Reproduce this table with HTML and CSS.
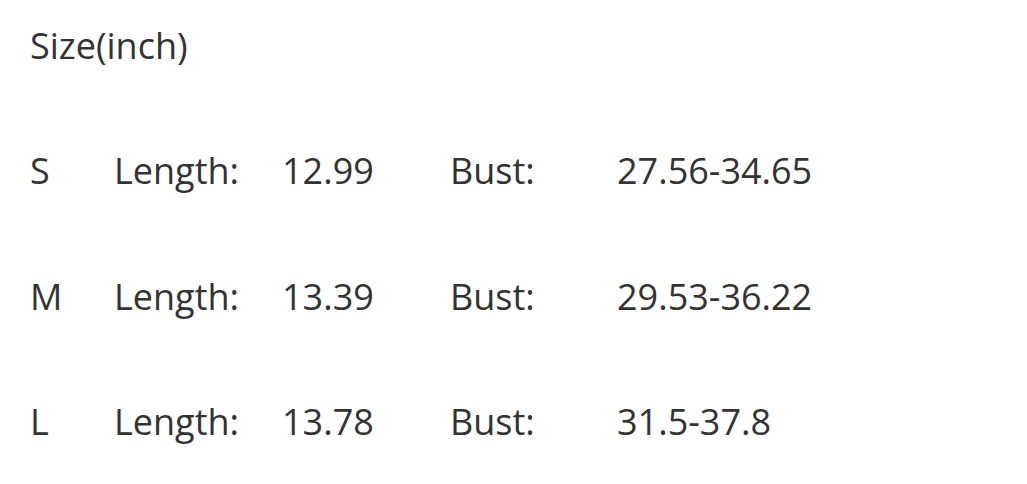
FILE: index.html
```html
<!DOCTYPE html>
<html>
<head>
<meta charset="utf-8">
<link rel="stylesheet" href="styles.css">
</head>
<body>
<div class="page">
  <div class="title">Size(inch)</div>
  <div class="table">
    <div class="row"><span>S</span><span>Length:</span><span>12.99</span><span>Bust:</span><span>27.56-34.65</span></div>
    <div class="row"><span>M</span><span>Length:</span><span>13.39</span><span>Bust:</span><span>29.53-36.22</span></div>
    <div class="row"><span>L</span><span>Length:</span><span>13.78</span><span>Bust:</span><span>31.5-37.8</span></div>
  </div>
</div>
</body>
</html>
```
FILE: styles.css
```css
html, body { margin: 0; padding: 0; background: #fff; }
body { font-family: "Open Sans", "Liberation Sans", sans-serif; color: #333; font-size: 36px; }
.page { padding: 21px 0 0 30px; }
.title { line-height: 49px; }
.table { display: flex; flex-direction: column; margin-top: 38px; }
.row {
  display: grid;
  grid-template-columns: 84px 168px 168px 167px auto;
  line-height: 125.5px;
}
```
